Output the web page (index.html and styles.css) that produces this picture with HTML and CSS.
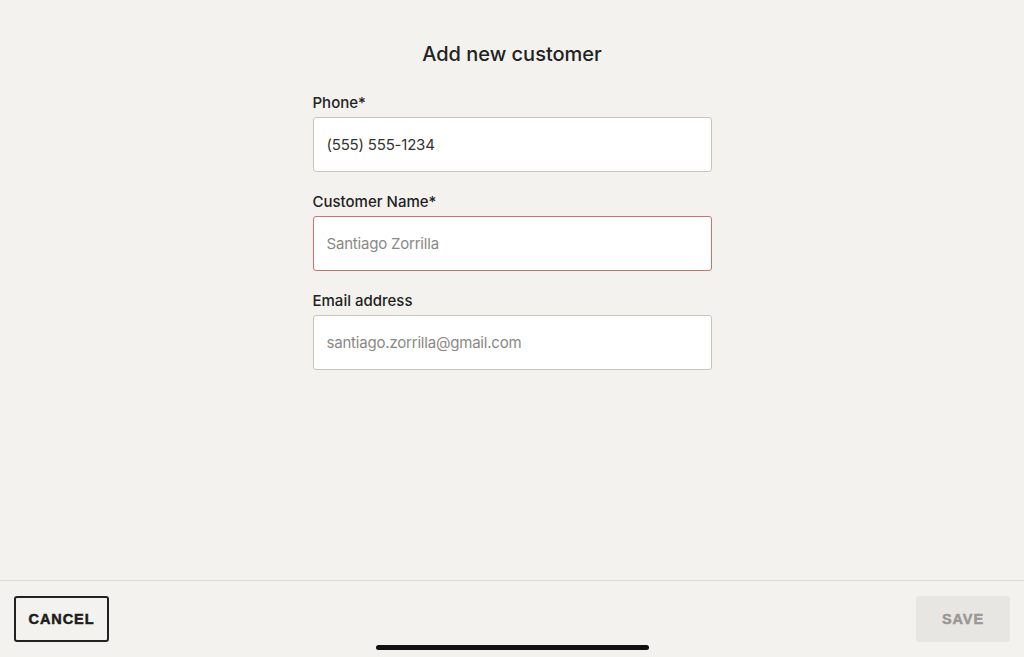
FILE: index.html
```html
<!DOCTYPE html>
<html>
<head>
<meta charset="utf-8">
<link rel="stylesheet" href="styles.css">
</head>
<body>
<div class="screen">
  <main class="content">
    <h1 class="title">Add new customer</h1>
    <form class="form">
      <div class="field">
        <label class="label">Phone*</label>
        <div class="input value">(555) 555-1234</div>
      </div>
      <div class="field">
        <label class="label">Customer Name*</label>
        <div class="input placeholder error">Santiago Zorrilla</div>
      </div>
      <div class="field">
        <label class="label">Email address</label>
        <div class="input placeholder">santiago.zorrilla@gmail.com</div>
      </div>
    </form>
  </main>
  <footer class="footer">
    <button class="btn btn-cancel">CANCEL</button>
    <button class="btn btn-save">SAVE</button>
    <div class="home-indicator"></div>
  </footer>
</div>
</body>
</html>
```

FILE: styles.css
```css
* { box-sizing: border-box; }
html, body { margin: 0; padding: 0; }
body {
  background: #f4f2ee;
  font-family: "Inter", "Liberation Sans", sans-serif;
  color: #222;
}
.screen {
  width: 1024px;
  height: 657px;
  display: flex;
  flex-direction: column;
}
.content {
  flex: 1;
  display: flex;
  flex-direction: column;
  align-items: center;
}
.title {
  margin: 40px 0 0;
  font-size: 20px;
  font-weight: 500;
  line-height: 28px;
  color: #222;
}
.form {
  width: 399px;
  margin-top: 25px;
  display: flex;
  flex-direction: column;
  gap: 20px;
}
.field {
  display: flex;
  flex-direction: column;
  gap: 4px;
}
.label {
  font-size: 15px;
  font-weight: 500;
  line-height: 20px;
  color: #222;
}
.input {
  height: 55px;
  background: #fff;
  border: 1px solid #c8c5c1;
  border-radius: 3px;
  padding: 0 13px;
  display: flex;
  align-items: center;
  font-size: 15px;
  letter-spacing: -0.2px;
}
.input.value { color: #333; }
.input.placeholder { color: #8a8886; }
.input.error { border-color: #c9736d; }
.footer {
  position: relative;
  height: 77px;
  border-top: 1px solid #dedbd7;
  display: flex;
  justify-content: space-between;
  align-items: flex-start;
  padding: 15px 14px 0 14px;
}
.btn {
  height: 46px;
  font-family: "Liberation Sans", sans-serif;
  font-weight: 700;
  font-size: 14.5px;
  letter-spacing: 0.9px;
  border-radius: 3px;
  cursor: pointer;
}
.btn-cancel {
  width: 95px;
  background: transparent;
  border: 2px solid #222;
  color: #1c1c1c;
  -webkit-text-stroke: 0.5px #1c1c1c;
}
.btn-save {
  width: 94px;
  background: #e8e6e2;
  border: none;
  color: #9a9896;
  -webkit-text-stroke: 0.5px #9a9896;
}
.home-indicator {
  position: absolute;
  left: 376px;
  bottom: 7px;
  width: 273px;
  height: 5px;
  border-radius: 3px;
  background: #111;
}
```
